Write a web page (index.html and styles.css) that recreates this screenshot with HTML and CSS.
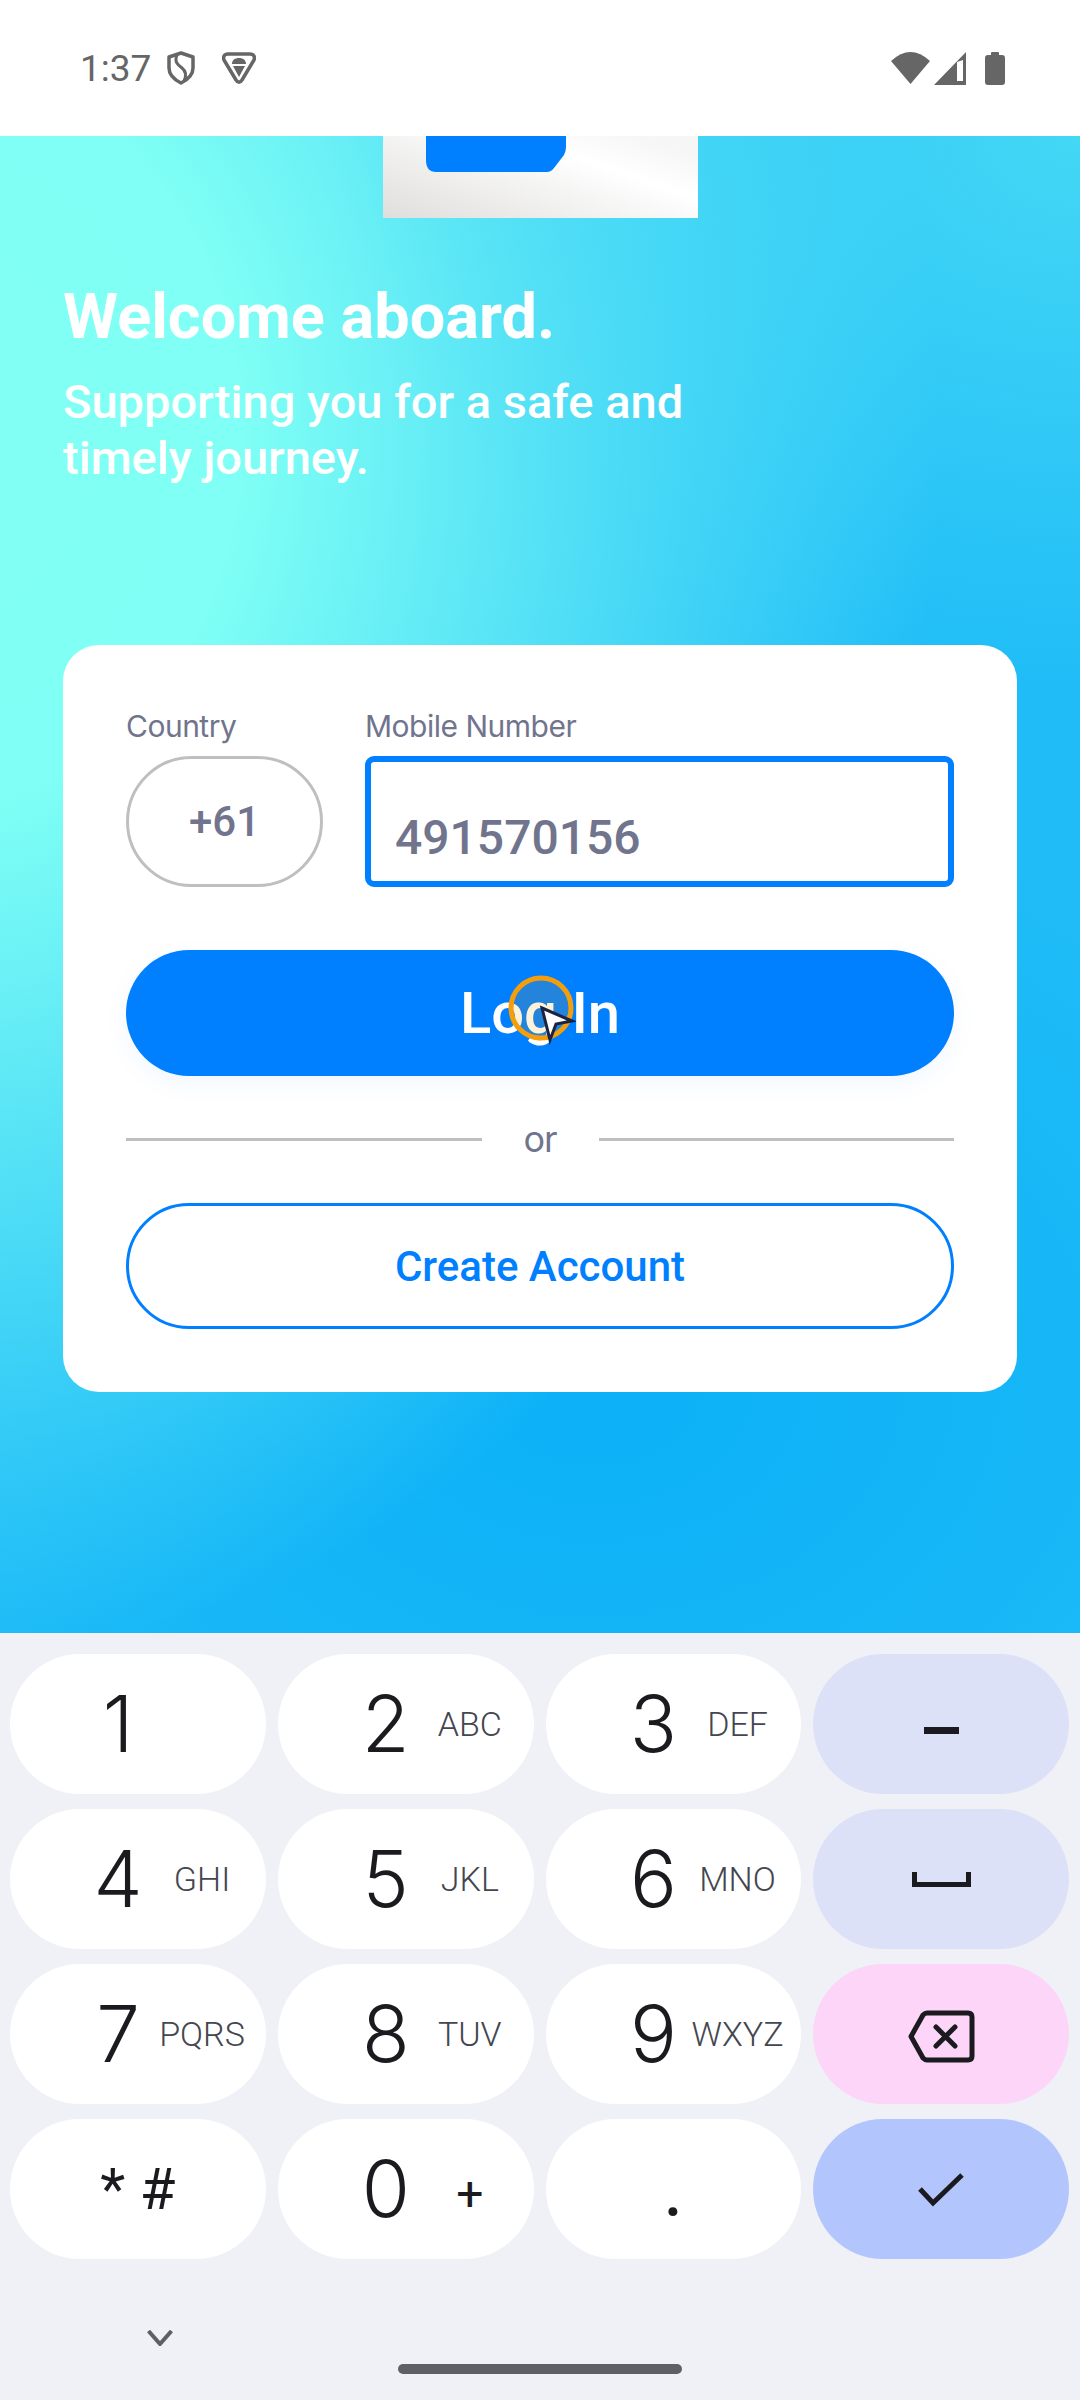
FILE: index.html
```html
<!DOCTYPE html>
<html lang="en">
<head>
    <meta charset="UTF-8">
    <meta name="viewport" content="width=device-width, initial-scale=1.0">
    <title>Welcome aboard</title>
    <link rel="stylesheet" href="styles.css">
</head>
<body>

    <!-- Status bar -->
    <div class="status-bar">
        <div class="status-left">
            <span class="clock">1:37</span>
            <svg class="icon-shield" width="28" height="34" viewBox="0 0 28 34">
                <path d="M14 2 L26 6 V17 C26 24 20 29 14 32 C8 29 2 24 2 17 V6 Z" fill="none" stroke="#666" stroke-width="3.5" stroke-linejoin="round"/>
                <path d="M10 4 C7 11 11 14 15 17 C20 21 19 26 17 30" fill="none" stroke="#666" stroke-width="3"/>
            </svg>
            <svg class="icon-vpn" width="34" height="32" viewBox="0 0 34 32">
                <path d="M6 2 H28 C32 2 33 5 32 8 L20 28 C18 31 16 31 14 28 L2 8 C1 5 2 2 6 2 Z" fill="none" stroke="#666" stroke-width="3.5"/>
                <path d="M10 12 C10 8 13 6 17 6 C21 6 24 8 24 12 Z M11 14 H23 L17 25 Z" fill="#666"/>
            </svg>
        </div>
        <div class="status-right">
            <svg width="39" height="32" viewBox="0 0 39 32"><path d="M0 9 Q19.5 -9 39 9 L19.5 32 Z" fill="#666"/></svg>
            <svg width="32" height="33" viewBox="0 0 32 33"><path fill-rule="evenodd" d="M32 0 V33 H0 Z M23 10 L23 29 H29 V8 Z" fill="#666"/></svg>
            <svg class="icon-battery" width="20" height="33" viewBox="0 0 20 33"><path d="M6 3 V1 Q6 0 7 0 H13 Q14 0 14 1 V3 H17 Q20 3 20 6 V30 Q20 33 17 33 H3 Q0 33 0 30 V6 Q0 3 3 3 Z" fill="#666"/></svg>
        </div>
    </div>

    <!-- Welcome area -->
    <div class="hero">
        <svg class="logo" width="315" height="82" viewBox="0 0 315 82">
            <defs>
                <linearGradient id="logoBg" x1="0" y1="1" x2="1" y2="0.25">
                    <stop offset="0" stop-color="#dfdedc"/>
                    <stop offset="0.75" stop-color="#ffffff"/>
                    <stop offset="1" stop-color="#f6f6f6"/>
                </linearGradient>
            </defs>
            <rect width="315" height="82" fill="url(#logoBg)"/>
            <path d="M43 0 H183 V11 Q183 15 181 19 L171 32 Q168 36 164 36 H53 Q43 36 43 24 Z" fill="#007fff"/>
        </svg>

        <h1 class="title">Welcome aboard.</h1>
        <p class="subtitle">Supporting you for a safe and<br>timely journey.</p>

        <div class="card">
            <div class="fields">
                <div class="field-country">
                    <label class="field-label">Country</label>
                    <div class="country-box">+61</div>
                </div>
                <div class="field-mobile">
                    <label class="field-label">Mobile Number</label>
                    <div class="mobile-box">491570156</div>
                </div>
            </div>

            <div class="btn-login">
                Log In
                <svg class="touch-cursor" width="70" height="76" viewBox="0 0 70 76">
                    <circle cx="35" cy="34" r="30" fill="#ffa000" fill-opacity="0.14" stroke="#f59e0b" stroke-width="5"/>
                    <path d="M36 34 L66 47 L50 50 L44 66 Z" fill="#fff" stroke="#1c2340" stroke-width="3" stroke-linejoin="miter"/>
                </svg>
            </div>

            <div class="divider">
                <span class="divider-line"></span>
                <span class="divider-text">or</span>
                <span class="divider-line"></span>
            </div>

            <div class="btn-create">Create Account</div>
        </div>
    </div>

    <!-- Number keyboard -->
    <div class="keyboard">
        <div class="keys">
            <div class="key"><span class="num">1</span></div>
            <div class="key"><span class="num">2</span><span class="letters">ABC</span></div>
            <div class="key"><span class="num">3</span><span class="letters">DEF</span></div>
            <div class="key key-fn">
                <svg class="icon-minus" width="35" height="7" viewBox="0 0 35 7"><rect width="35" height="7" fill="#1b1b1f"/></svg>
            </div>

            <div class="key"><span class="num">4</span><span class="letters">GHI</span></div>
            <div class="key"><span class="num">5</span><span class="letters">JKL</span></div>
            <div class="key"><span class="num">6</span><span class="letters">MNO</span></div>
            <div class="key key-fn">
                <svg width="59" height="15" viewBox="0 0 59 15"><path d="M2.5 0 V12.5 H56.5 V0" fill="none" stroke="#1b1b1f" stroke-width="5"/></svg>
            </div>

            <div class="key"><span class="num">7</span><span class="letters">PQRS</span></div>
            <div class="key"><span class="num">8</span><span class="letters">TUV</span></div>
            <div class="key"><span class="num">9</span><span class="letters">WXYZ</span></div>
            <div class="key key-fn key-delete">
                <svg class="icon-delete" width="67" height="53" viewBox="0 0 67 53">
                    <path d="M19 3 H60 Q64 3 64 7 V46 Q64 50 60 50 H19 Q17 50 15 48 L3 26.5 L15 5 Q17 3 19 3 Z" fill="none" stroke="#1b1b1f" stroke-width="5" stroke-linejoin="round"/>
                    <path d="M28 17 L47 36 M47 17 L28 36" fill="none" stroke="#1b1b1f" stroke-width="5" stroke-linecap="round"/>
                </svg>
            </div>

            <div class="key key-symbols">* #</div>
            <div class="key"><span class="num">0</span><span class="letters plus">+</span></div>
            <div class="key key-dot">.</div>
            <div class="key key-fn key-done">
                <svg width="46" height="35" viewBox="0 0 46 35"><path d="M2 17 L15 31 L44 3" fill="none" stroke="#1b1b1f" stroke-width="5"/></svg>
            </div>
        </div>

        <div class="nav-row">
            <svg class="nav-hide" width="26" height="16" viewBox="0 0 26 16"><path d="M1.5 1 L13 14 L24.5 1" fill="none" stroke="#5f6064" stroke-width="4"/></svg>
            <div class="home-bar"></div>
        </div>
    </div>

</body>
</html>
```

FILE: styles.css
```css
body {
    margin: 0;
    width: 1080px;
    height: 2400px;
    display: flex;
    flex-direction: column;
    overflow: hidden;
    font-family: 'Roboto', sans-serif;
}

/* Status bar */
.status-bar {
    height: 136px;
    background-color: #fff;
    display: flex;
    align-items: center;
    justify-content: space-between;
    padding: 0 75px 0 80px;
    flex-shrink: 0;
}
.status-left {
    display: flex;
    align-items: center;
}
.clock {
    font-size: 37px;
    font-weight: 400;
    color: #666;
    width: 87px;
}
.icon-vpn {
    margin-left: 27px;
}
.status-right {
    display: flex;
    align-items: center;
    gap: 4px;
}
.icon-battery {
    margin-left: 15px;
}

/* Welcome area */
.hero {
    flex: 1;
    display: flex;
    flex-direction: column;
    background:
        radial-gradient(760px 560px at 1080px 0, rgba(74, 220, 245, 0.85) 0%, rgba(74, 220, 245, 0) 100%),
        radial-gradient(1000px 1220px at -60px 300px, #82fff5 0%, #7ffff5 30%, rgba(127, 255, 245, 0) 100%),
        radial-gradient(800px 600px at 55% 1250px, #0bb0f7 0%, rgba(11, 176, 247, 0) 100%),
        #1fbcf7;
}
.logo {
    display: block;
    margin-left: 383px;
    flex-shrink: 0;
}
.title {
    margin: 63px 0 0 63px;
    font-size: 63px;
    line-height: 72px;
    font-weight: 700;
    color: #fff;
}
.subtitle {
    margin: 21px 0 0 63px;
    font-size: 47px;
    line-height: 56px;
    font-weight: 500;
    color: #fff;
}

/* Card */
.card {
    margin: 159px 63px 0;
    padding: 63px;
    background-color: #fff;
    border-radius: 36px;
    display: flex;
    flex-direction: column;
}
.fields {
    display: flex;
    gap: 42px;
}
.field-country {
    width: 197px;
}
.field-mobile {
    flex: 1;
}
.field-label {
    display: block;
    font-family: 'Inter', sans-serif;
    font-size: 30px;
    letter-spacing: -0.5px;
    line-height: 36px;
    color: #71748d;
    margin-bottom: 12px;
    white-space: nowrap;
}
.country-box {
    height: 131px;
    box-sizing: border-box;
    border: 3px solid #bfbfbf;
    border-radius: 66px;
    display: flex;
    align-items: center;
    justify-content: center;
    font-size: 42px;
    font-weight: 500;
    color: #71748d;
}
.mobile-box {
    height: 131px;
    box-sizing: border-box;
    border: 6px solid #007fff;
    border-radius: 9px;
    display: flex;
    align-items: flex-end;
    padding: 0 0 15px 24px;
    font-size: 48px;
    line-height: 56px;
    font-weight: 500;
    color: #71748d;
}
.btn-login {
    position: relative;
    margin-top: 63px;
    height: 126px;
    border-radius: 63px;
    background-color: #007fff;
    color: #fff;
    font-size: 58px;
    font-weight: 500;
    display: flex;
    align-items: center;
    justify-content: center;
    box-shadow: 0 8px 24px rgba(0, 127, 255, 0.06);
}
.touch-cursor {
    position: absolute;
    left: 380px;
    top: 24px;
}
.divider {
    margin: 42px 0 43px;
    height: 42px;
    display: flex;
    align-items: center;
}
.divider-line {
    flex: 1;
    height: 3px;
    background-color: #bfbfbf;
}
.divider-text {
    width: 117px;
    text-align: center;
    font-family: 'Inter', sans-serif;
    font-size: 36px;
    letter-spacing: -1px;
    color: #71748d;
}
.btn-create {
    height: 126px;
    box-sizing: border-box;
    border: 3px solid #007fff;
    border-radius: 63px;
    display: flex;
    align-items: center;
    justify-content: center;
    color: #007fff;
    font-size: 42px;
    font-weight: 500;
}

/* Number keyboard */
.keyboard {
    height: 767px;
    flex-shrink: 0;
    background-color: #f0f0f7;
    display: flex;
    flex-direction: column;
}
.keys {
    display: grid;
    grid-template-columns: repeat(4, 1fr);
    grid-auto-rows: 140px;
    gap: 15px 12px;
    padding: 21px 11px 0 10px;
}
.key {
    border-radius: 70px;
    background-color: #fff;
    color: #1b1b1f;
    display: grid;
    grid-template-columns: 80px 88px;
    padding-left: 68px;
    align-items: center;
    justify-items: center;
}
.num {
    font-family: 'Inter', sans-serif;
    font-size: 78px;
    font-weight: 350;
    line-height: 90px;
}
.letters {
    font-size: 34px;
    font-weight: 300;
    line-height: 40px;
    color: #44464f;
    white-space: nowrap;
}
.plus {
    font-size: 48px;
    font-weight: 400;
    color: #1b1b1f;
    padding-top: 10px;
}
.key-fn {
    display: flex;
    align-items: center;
    justify-content: center;
    padding: 0;
    background-color: #dde1f7;
}
.icon-minus {
    margin-top: 13px;
}
.icon-delete {
    margin-top: 5px;
}
.key-delete {
    background-color: #fcd5f8;
}
.key-done {
    background-color: #b3c5fd;
}
.key-symbols {
    display: flex;
    align-items: center;
    justify-content: center;
    padding: 0;
    font-size: 58px;
}
.key-dot {
    display: flex;
    align-items: center;
    justify-content: center;
    padding: 0;
    font-size: 80px;
    line-height: 90px;
}
.nav-row {
    position: relative;
    flex: 1;
}
.nav-hide {
    position: absolute;
    left: 147px;
    top: 71px;
}
.home-bar {
    position: absolute;
    left: 398px;
    top: 105px;
    width: 284px;
    height: 10px;
    border-radius: 5px;
    background-color: #606064;
}
```
